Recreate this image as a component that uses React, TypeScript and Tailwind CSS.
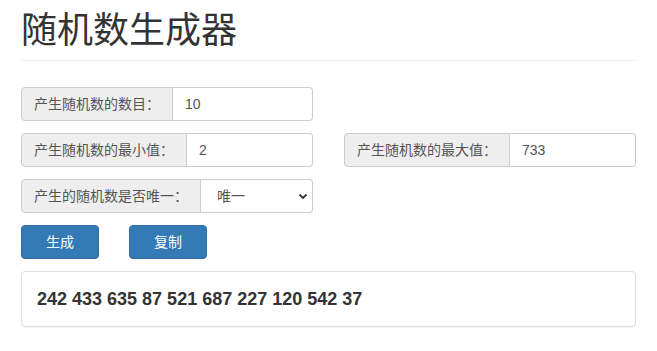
import { useState } from "react";

const font = { fontFamily: '"Liberation Sans", "Noto Sans CJK SC", sans-serif' };

const Field = ({ label, value }: { label: string; value: string }) => (
  <div className="flex h-[34px] w-full">
    <span className="flex items-center px-3 bg-[#eeeeee] border border-[#cccccc] rounded-l-[4px] text-[14px] text-[#555555] whitespace-nowrap">
      {label}
    </span>
    <input
      className="flex-1 min-w-0 px-3 border border-l-0 border-[#cccccc] rounded-r-[4px] text-[14px] text-[#555555] outline-none bg-white"
      defaultValue={value}
    />
  </div>
);

const App = () => {
  const [unique, setUnique] = useState("1");
  const numbers = [242, 433, 635, 87, 521, 687, 227, 120, 542, 37];

  return (
    <div className="min-h-screen bg-white px-[21px] pt-[11px]" style={font}>
      <h1 className="text-[36px] leading-[40px] font-normal text-[#333333] pb-[9px] border-b border-[#eeeeee]">
        随机数生成器
      </h1>

      <div className="grid grid-cols-2 gap-x-[31px] gap-y-[12px] mt-[26px]">
        <Field label="产生随机数的数目：" value="10" />
        <div />
        <Field label="产生随机数的最小值：" value="2" />
        <Field label="产生随机数的最大值：" value="733" />
        <div className="flex h-[34px] w-full">
          <span className="flex items-center px-3 bg-[#eeeeee] border border-[#cccccc] rounded-l-[4px] text-[14px] text-[#555555] whitespace-nowrap">
            产生的随机数是否唯一：
          </span>
          <div className="relative flex-1 min-w-0">
            <select
              value={unique}
              onChange={(e) => setUnique(e.target.value)}
              className="appearance-none w-full h-full pl-4 pr-6 border border-l-0 border-[#cccccc] rounded-r-[4px] text-[14px] text-[#555555] bg-white outline-none"
            >
              <option value="1">唯一</option>
              <option value="0">不唯一</option>
            </select>
            <svg
              className="absolute right-[5px] top-[13px] pointer-events-none"
              width="10"
              height="8"
              viewBox="0 0 10 8"
            >
              <path d="M1.5 2.5 L5 6 L8.5 2.5" fill="none" stroke="#333" strokeWidth="1.8" />
            </svg>
          </div>
        </div>
      </div>

      <div className="flex gap-[30px] mt-[12px]">
        <button className="h-[34px] px-[24px] bg-[#337ab7] border border-[#2e6da4] rounded-[4px] text-white text-[14px]">
          生成
        </button>
        <button className="h-[34px] px-[24px] bg-[#337ab7] border border-[#2e6da4] rounded-[4px] text-white text-[14px]">
          复制
        </button>
      </div>

      <div className="mt-[12px] border border-[#dddddd] rounded-[4px] px-[15px] py-[17px] shadow-[0_1px_1px_rgba(0,0,0,0.05)]">
        <p className="text-[18px] leading-[20px] font-bold text-[#333333]">{numbers.join(" ")}</p>
      </div>
    </div>
  );
};

export default App;
